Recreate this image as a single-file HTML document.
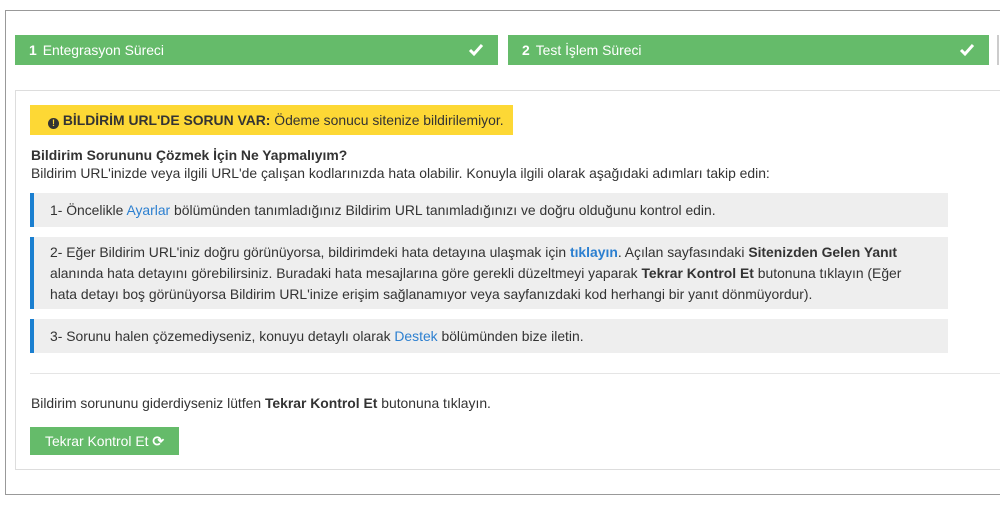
<!DOCTYPE html>
<html><head><meta charset="utf-8"><style>
body{margin:0;width:1000px;height:508px;background:#fff;font-family:"Liberation Sans",sans-serif;font-size:13.9px;color:#333;overflow:hidden;position:relative}
.frame{position:absolute;left:5px;top:10px;width:1000px;height:485px;border:1px solid #999;border-right:none;box-sizing:border-box}
.step{position:absolute;top:35px;height:30px;background:#65bb6a;color:#fff;line-height:30px;font-size:13.9px;box-sizing:border-box;padding-left:14px}
.step b{margin-right:6px}
.step svg{position:absolute;right:14px;top:8px}
.vline{position:absolute;left:997px;top:35px;width:2px;height:30px;background:#ccc}
.panel{position:absolute;left:15px;top:90px;width:1000px;height:380px;border:1px solid #ddd;box-sizing:border-box}
.warn{position:absolute;left:30px;top:105px;width:483px;height:30px;background:#fdd835;line-height:30px;color:#333;box-sizing:border-box;padding-left:18px}
.abs{position:absolute;left:31px;white-space:nowrap}
.box{position:absolute;left:30px;width:918px;background:#eee;border-left:4px solid #1a7fd0;box-sizing:border-box;padding-left:16px;line-height:21px}
a{color:#2b7fd0;text-decoration:none}
.btn{position:absolute;left:30px;top:427px;width:149px;height:28px;background:#65bb6a;color:#fff;line-height:28px;text-align:center}
</style></head><body>
<div class="frame"></div>
<div class="step" style="left:15px;width:483px"><b>1</b>Entegrasyon Süreci<svg width="16" height="14" viewBox="0 0 16 14"><path d="M2 7l4 4 8-9" stroke="#fff" stroke-width="3" fill="none"/></svg></div>
<div class="step" style="left:508px;width:481px"><b>2</b>Test İşlem Süreci<svg width="16" height="14" viewBox="0 0 16 14"><path d="M2 7l4 4 8-9" stroke="#fff" stroke-width="3" fill="none"/></svg></div>
<div class="vline"></div>
<div class="panel"></div>
<div class="warn"><span style="display:inline-block;width:11px;height:11px;border-radius:50%;background:#333;color:#fdd835;font-size:9px;line-height:11px;text-align:center;font-weight:bold;vertical-align:-1px">!</span> <b>BİLDİRİM URL'DE SORUN VAR:</b> Ödeme sonucu sitenize bildirilemiyor.</div>
<div class="abs" style="top:147px;font-weight:bold">Bildirim Sorununu Çözmek İçin Ne Yapmalıyım?</div>
<div class="abs" style="top:165px">Bildirim URL'inizde veya ilgili URL'de çalışan kodlarınızda hata olabilir. Konuyla ilgili olarak aşağıdaki adımları takip edin:</div>
<div class="box" style="top:193px;height:34px;line-height:34px">1- Öncelikle <a>Ayarlar</a> bölümünden tanımladığınız Bildirim URL tanımladığınızı ve doğru olduğunu kontrol edin.</div>
<div class="box" style="top:237px;height:72px;padding-top:5px;padding-right:30px">2- Eğer Bildirim URL'iniz doğru görünüyorsa, bildirimdeki hata detayına ulaşmak için <a><b>tıklayın</b></a>. Açılan sayfasındaki <b>Sitenizden Gelen Yanıt</b><br>alanında hata detayını görebilirsiniz. Buradaki hata mesajlarına göre gerekli düzeltmeyi yaparak <b>Tekrar Kontrol Et</b> butonuna tıklayın (Eğer<br>hata detayı boş görünüyorsa Bildirim URL'inize erişim sağlanamıyor veya sayfanızdaki kod herhangi bir yanıt dönmüyordur).</div>
<div class="box" style="top:319px;height:34px;line-height:34px">3- Sorunu halen çözemediyseniz, konuyu detaylı olarak <a>Destek</a> bölümünden bize iletin.</div>
<div style="position:absolute;left:30px;top:373px;width:970px;height:1px;background:#e5e5e5"></div>
<div class="abs" style="top:395px">Bildirim sorununu giderdiyseniz lütfen <b>Tekrar Kontrol Et</b> butonuna tıklayın.</div>
<div class="btn">Tekrar Kontrol Et <b>⟳</b></div>
</body></html>
